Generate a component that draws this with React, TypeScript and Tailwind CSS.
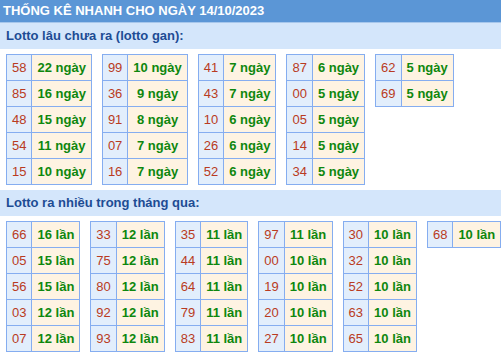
import React from "react";

type Item = [string, string];

const gan: Item[][] = [
  [["58", "22 ngày"], ["85", "16 ngày"], ["48", "15 ngày"], ["54", "11 ngày"], ["15", "10 ngày"]],
  [["99", "10 ngày"], ["36", "9 ngày"], ["91", "8 ngày"], ["07", "7 ngày"], ["16", "7 ngày"]],
  [["41", "7 ngày"], ["43", "7 ngày"], ["10", "6 ngày"], ["26", "6 ngày"], ["52", "6 ngày"]],
  [["87", "6 ngày"], ["00", "5 ngày"], ["05", "5 ngày"], ["14", "5 ngày"], ["34", "5 ngày"]],
  [["62", "5 ngày"], ["69", "5 ngày"]],
];

const nhieu: Item[][] = [
  [["66", "16 lần"], ["05", "15 lần"], ["56", "15 lần"], ["03", "12 lần"], ["07", "12 lần"]],
  [["33", "12 lần"], ["75", "12 lần"], ["80", "12 lần"], ["92", "12 lần"], ["93", "12 lần"]],
  [["35", "11 lần"], ["44", "11 lần"], ["64", "11 lần"], ["79", "11 lần"], ["83", "11 lần"]],
  [["97", "11 lần"], ["00", "10 lần"], ["19", "10 lần"], ["20", "10 lần"], ["27", "10 lần"]],
  [["30", "10 lần"], ["32", "10 lần"], ["52", "10 lần"], ["63", "10 lần"], ["65", "10 lần"]],
  [["68", "10 lần"]],
];

function Table({ rows }: { rows: Item[] }) {
  return (
    <div className="shrink-0 self-start grid grid-cols-[auto_auto] border-l border-t border-[#85adf0]">
      {rows.map(([n, v], i) => (
        <React.Fragment key={i}>
          <div className="h-[26px] flex items-center justify-center px-[5px] bg-[#e2eefc] text-[#b93b22] border-r border-b border-[#85adf0]">
            {n}
          </div>
          <div className="h-[26px] flex items-center justify-center px-[5px] bg-[#fef3e2] text-[#0e870e] font-bold border-r border-b border-[#85adf0] whitespace-nowrap">
            {v}
          </div>
        </React.Fragment>
      ))}
    </div>
  );
}

function Section({ title, tables }: { title: string; tables: Item[][] }) {
  return (
    <div>
      <div className="h-[26px] bg-[#d4e6fb] flex items-center pl-[6px] font-bold text-[#1d4c94] text-[13px]">
        {title}
      </div>
      <div className="flex gap-x-[10px] pl-[6px] pt-[5px] pb-[5px] text-[13px] leading-none overflow-hidden">
        {tables.map((t, i) => (
          <Table key={i} rows={t} />
        ))}
      </div>
    </div>
  );
}

export default function App() {
  return (
    <div
      className="w-[501px] h-[353px] bg-white overflow-hidden"
      style={{ fontFamily: '"Liberation Sans", Arial, sans-serif' }}
    >
      <div className="h-[23px] bg-[#5b96d6] border-b border-[#a7c7ec] flex items-center pl-[3px] text-white font-bold text-[13px]">
        THỐNG KÊ NHANH CHO NGÀY 14/10/2023
      </div>
      <Section title="Lotto lâu chưa ra (lotto gan):" tables={gan} />
      <Section title="Lotto ra nhiều trong tháng qua:" tables={nhieu} />
    </div>
  );
}
